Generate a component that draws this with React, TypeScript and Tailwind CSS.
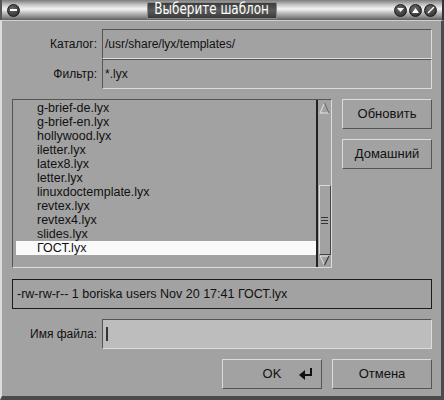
import React from 'react';

const files = [
  'g-brief-de.lyx',
  'g-brief-en.lyx',
  'hollywood.lyx',
  'iletter.lyx',
  'latex8.lyx',
  'letter.lyx',
  'linuxdoctemplate.lyx',
  'revtex.lyx',
  'revtex4.lyx',
  'slides.lyx',
  'ГОСТ.lyx',
];

const font = { fontFamily: '"Liberation Sans", Arial, sans-serif' };

const TitleButton: React.FC<{ children?: React.ReactNode }> = ({ children }) => (
  <div className="w-[13px] h-[13px] rounded-full bg-[radial-gradient(circle_at_40%_35%,#6a6a6a,#262626)] border border-[#1a1a1a] flex items-center justify-center">
    {children}
  </div>
);

const Sunken: React.FC<{ className?: string; children?: React.ReactNode }> = ({ className = '', children }) => (
  <div className={`border border-t-[#555] border-l-[#555] border-b-[#dcdcdc] border-r-[#dcdcdc] ${className}`}>{children}</div>
);

const Raised: React.FC<{ className?: string; children?: React.ReactNode }> = ({ className = '', children }) => (
  <div className={`border border-t-[#dcdcdc] border-l-[#dcdcdc] border-b-[#555] border-r-[#555] flex items-center justify-center text-[13px] text-[#111] ${className}`}>
    {children}
  </div>
);

const App: React.FC = () => {
  return (
    <div className="w-[444px] h-[400px] bg-[#a2a2a2] flex flex-col overflow-hidden" style={font}>
      {/* title bar */}
      <div className="h-[20px] flex items-center px-[5px] border-l-2 border-l-[#555] border-r-2 border-r-[#333] bg-[linear-gradient(to_bottom,#7c7c7c_0%,#c8c8c8_25%,#f4f4f4_45%,#bdbdbd_65%,#8a8a8a_85%,#5e5e5e_100%)]">
        <TitleButton>
          <div className="w-[7px] h-[2px] bg-white" />
        </TitleButton>
        <div className="flex-1 flex justify-center">
          <div className="ml-[10px] w-[130px] h-[17px] border border-[#888] bg-[linear-gradient(to_bottom,#3c3c3c,#5a5a5a_50%,#3a3a3a)] flex items-center justify-center">
            <span
              className="inline-block text-white text-[15.5px] leading-none whitespace-nowrap scale-x-[0.86]"
              style={{ fontFamily: '"DejaVu Sans Condensed", "DejaVu Sans", sans-serif', fontStretch: 'condensed' }}
            >
              Выберите шаблон
            </span>
          </div>
        </div>
        <div className="flex gap-[2px]">
          <TitleButton>
            <svg width="7" height="5" viewBox="0 0 7 5"><path d="M0 0h7L3.5 4z" fill="white" /></svg>
          </TitleButton>
          <TitleButton>
            <svg width="7" height="5" viewBox="0 0 7 5"><path d="M0 5h7L3.5 0z" fill="white" /></svg>
          </TitleButton>
          <TitleButton>
            <svg width="8" height="8" viewBox="0 0 8 8"><path d="M1 7L7 1" stroke="white" strokeWidth="1.5" /></svg>
          </TitleButton>
        </div>
      </div>

      {/* body */}
      <div className="flex-1 flex flex-col pl-[10px] pr-[9px] pt-[8px] border-t border-t-[#d0d0d0] border-l-2 border-l-[#dcdcdc] border-r-[3px] border-r-[#4a4a4a] border-b-[4px] border-b-[#4a4a4a]">
        <div className="flex items-center h-[30px]">
          <div className="w-[90px] pr-[5px] text-right text-[12px] text-[#111]">Каталог:</div>
          <Sunken className="flex-1 h-[30px] flex items-center px-[2px] text-[12px] text-[#111]">/usr/share/lyx/templates/</Sunken>
        </div>
        <div className="flex items-center h-[30px]">
          <div className="w-[90px] pr-[5px] text-right text-[12px] text-[#111]">Фильтр:</div>
          <Sunken className="flex-1 h-[30px] flex items-center px-[2px] text-[12px] text-[#111]">*.lyx</Sunken>
        </div>

        <div className="flex mt-[10px] gap-[10px]">
          <Sunken className="w-[320px] h-[169px] flex">
            <div className="flex-1 pl-[3px] pt-[1px]">
              {files.map((f, i) => (
                <div
                  key={f}
                  className={`h-[14px] flex items-center pl-[21px] text-[12.5px] text-[#111] leading-none ${i === files.length - 1 ? 'bg-[#fafafa]' : ''}`}
                >
                  {f}
                </div>
              ))}
            </div>
            {/* scrollbar */}
            <div className="w-[15px] border-l-2 border-l-[#222] flex flex-col items-center pt-[1px] pb-[1px]">
              <svg width="11" height="12" viewBox="0 0 11 12" className="mt-[1px]">
                <path d="M5.5 1L1 11h9z" fill="none" stroke="#e4e4e4" strokeWidth="1" />
                <path d="M5.5 1L10 11" stroke="#555" strokeWidth="1" />
              </svg>
              <div className="flex-1" />
              <div className="w-[12px] h-[70px] border border-t-[#dcdcdc] border-l-[#dcdcdc] border-b-[#444] border-r-[#444] flex flex-col items-center justify-center gap-[2px]">
                <div className="w-[7px] h-px bg-[#333]" />
                <div className="w-[7px] h-px bg-[#333]" />
                <div className="w-[7px] h-px bg-[#333]" />
              </div>
              <svg width="11" height="11" viewBox="0 0 11 11">
                <path d="M1 1h9L5.5 10z" fill="none" stroke="#e4e4e4" strokeWidth="1" />
                <path d="M10 1L5.5 10" stroke="#333" strokeWidth="1.2" />
              </svg>
            </div>
          </Sunken>
          <div className="flex flex-col gap-[10px]">
            <Raised className="w-[90px] h-[30px]">Обновить</Raised>
            <Raised className="w-[90px] h-[30px]">Домашний</Raised>
          </div>
        </div>

        <div className="mt-[11px] h-[30px] border border-[#1a1a1a] flex items-center px-[4px] text-[12.5px] text-[#111]">
          -rw-rw-r-- 1 boriska users Nov 20 17:41 ГОСТ.lyx
        </div>

        <div className="flex items-center mt-[10px] h-[30px]">
          <div className="w-[90px] pr-[5px] text-right text-[12px] text-[#111]">Имя файла:</div>
          <Sunken className="flex-1 h-[30px] bg-[#bdbdbd] flex items-center px-[3px]">
            <div className="w-[2px] h-[14px] bg-[#333]" />
          </Sunken>
        </div>

        <div className="flex justify-end gap-[10px] mt-[10px]">
          <Raised className="w-[100px] h-[30px] relative">
            OK
            <svg width="14" height="12" viewBox="0 0 14 12" className="absolute right-[8px] top-[8px]">
              <path d="M12 0v7H5" fill="none" stroke="#111" strokeWidth="2" />
              <path d="M0 7l6-5v10z" fill="#111" />
            </svg>
          </Raised>
          <Raised className="w-[100px] h-[30px]">Отмена</Raised>
        </div>
      </div>
    </div>
  );
};

export default App;
